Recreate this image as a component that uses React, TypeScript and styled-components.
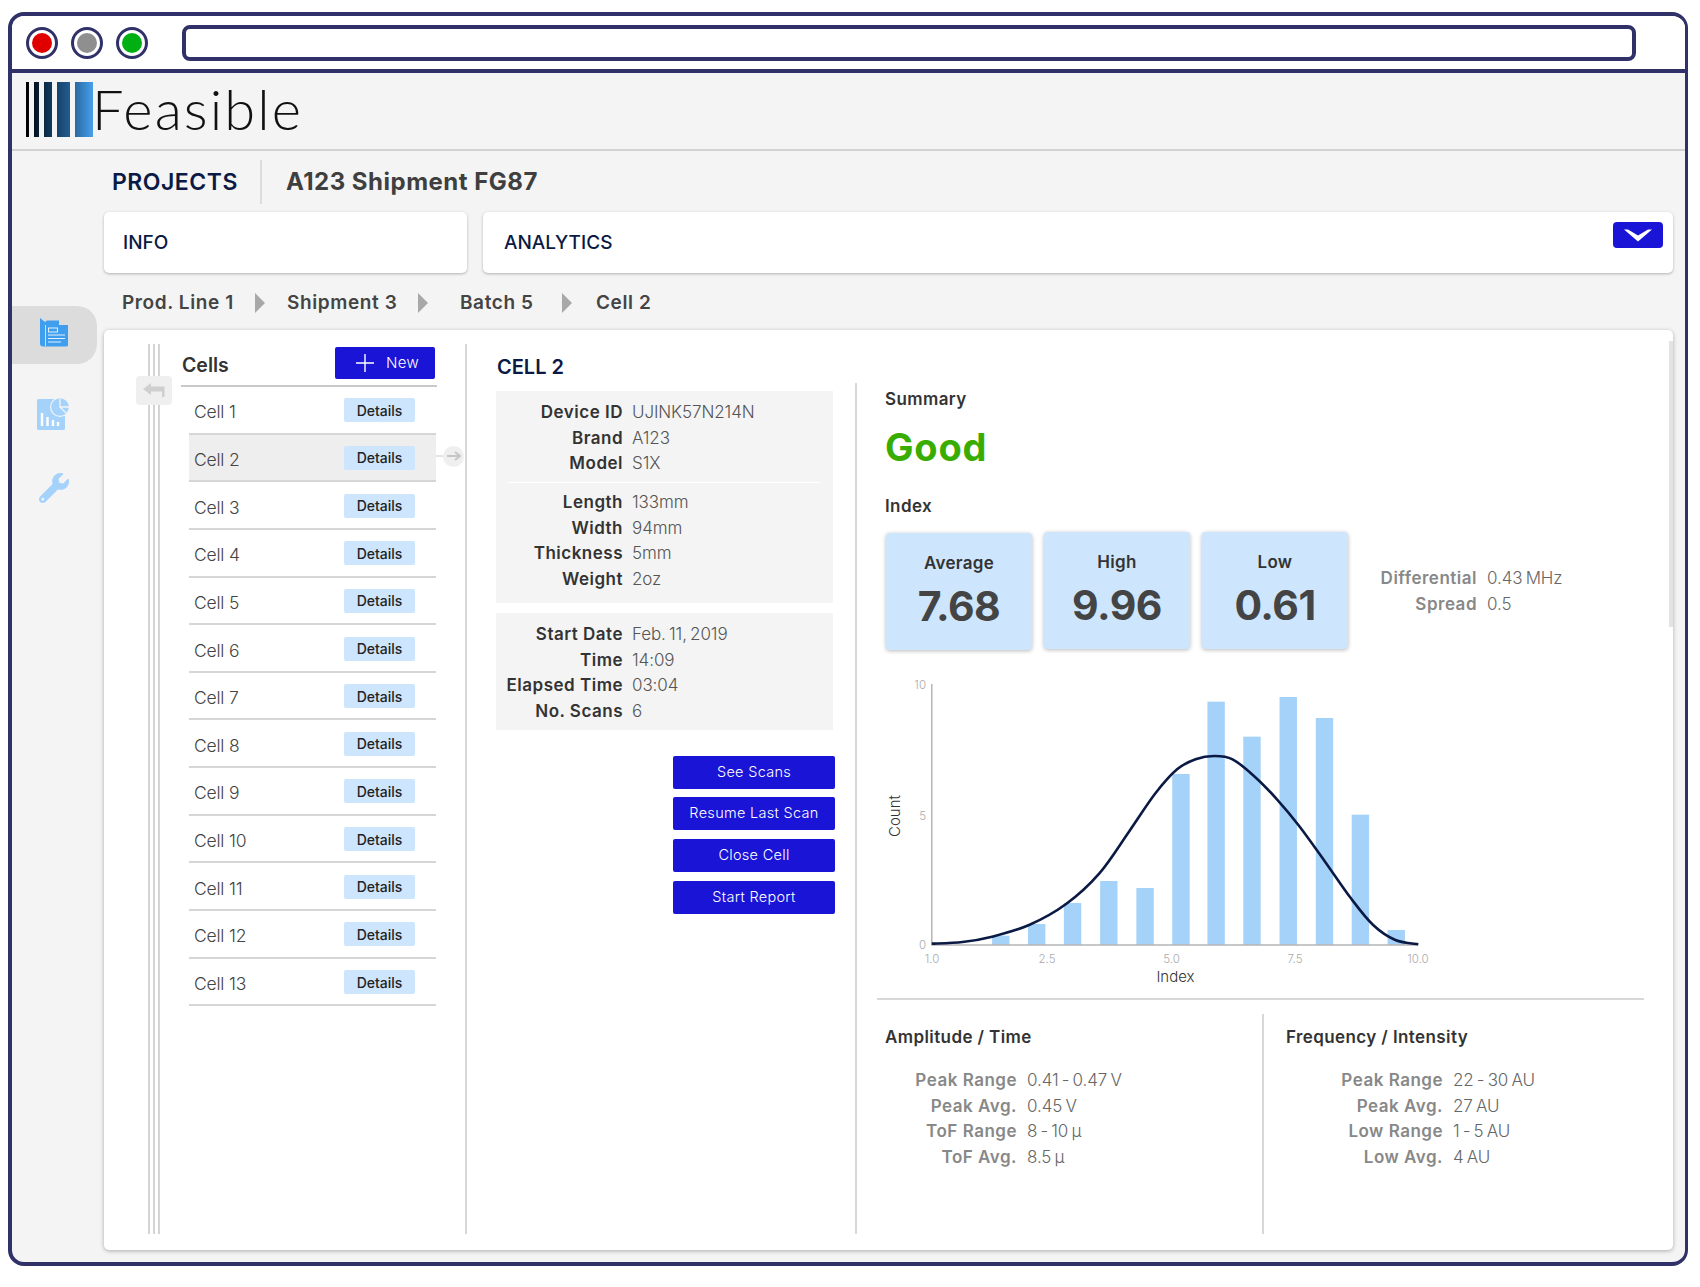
import React from "react";
import styled, { createGlobalStyle } from "styled-components";
import { FaWrench } from "react-icons/fa";

const font = `"Inter", "Open Sans", "Liberation Sans", sans-serif`;
const navy = "#2f3168";
const ink = "#0b1a44";
const blue = "#1a14d6";
const paleBlue = "#cde6fd";

const Global = createGlobalStyle`
  * { box-sizing: border-box; }
  html, body { margin: 0; padding: 0; background: #fff; }
  body { font-family: ${font}; color: #333; }
`;

const Page = styled.div`
  padding: 12px 12px 21px 8px;
  width: 1700px;
  height: 1287px;
`;
const Window = styled.div`
  height: 1254px;
  border: solid ${navy};
  border-width: 4px 3px 4px 4px;
  border-radius: 16px;
  overflow: hidden;
  display: flex;
  flex-direction: column;
  background: #f4f4f4;
`;
const TitleBar = styled.div`
  height: 57px;
  flex: none;
  background: #fff;
  border-bottom: 4px solid ${navy};
  display: flex;
  align-items: center;
  padding: 0 49px 0 14px;
`;
const Lights = styled.div`
  display: flex;
  gap: 13px;
  margin-right: 34px;
`;
const Light = styled.span<{ $c: string }>`
  width: 32px;
  height: 32px;
  border-radius: 50%;
  border: 3.5px solid ${navy};
  padding: 3px;
  background: #fff;
  display: block;
  &::after {
    content: "";
    display: block;
    width: 100%;
    height: 100%;
    border-radius: 50%;
    background: ${(p) => p.$c};
  }
`;
const UrlBar = styled.div`
  flex: 1;
  height: 36px;
  border: 4px solid ${navy};
  border-radius: 8px;
  background: #fff;
`;
const LogoBar = styled.div`
  height: 78px;
  flex: none;
  border-bottom: 2px solid #d2d2d2;
  display: flex;
  align-items: flex-start;
  padding: 9px 0 0 14px;
`;
const LogoMark = styled.svg`
  width: 68px;
  height: 55px;
  flex: none;
  display: block;
`;
const LogoText = styled.div`
  font-family: "Lato", ${font};
  font-weight: 300;
  font-size: 56px;
  line-height: 53px;
  color: #111;
  margin-left: -2px;
  letter-spacing: 2.1px;
`;
const Body = styled.div`
  flex: 1;
  display: flex;
  min-height: 0;
`;
const Nav = styled.nav`
  width: 92px;
  flex: none;
  padding-top: 155px;
  display: flex;
  flex-direction: column;
`;
const NavItem = styled.div<{ $active?: boolean; $h: number; $pt: number }>`
  width: 85px;
  height: ${(p) => p.$h}px;
  display: flex;
  justify-content: center;
  padding: ${(p) => p.$pt}px 2px 0 0;
  border-radius: 0 20px 20px 0;
  background: ${(p) => (p.$active ? "#dcdcdc" : "transparent")};
`;
const Main = styled.div`
  flex: 1;
  min-width: 0;
  padding-right: 12px;
  display: flex;
  flex-direction: column;
`;
const ProjectRow = styled.div`
  height: 61px;
  flex: none;
  display: flex;
  align-items: center;
  padding-left: 8px;
`;
const ProjectsLabel = styled.div`
  font-size: 23px;
  font-weight: 600;
  color: ${ink};
  width: 150px;
  height: 44px;
  line-height: 44px;
  border-right: 2px solid #dcdcdc;
  margin-top: 1px;
  letter-spacing: 0.5px;
`;
const ProjectName = styled.div`
  font-size: 24px;
  font-weight: 700;
  color: #3f3f3f;
  margin-left: 24px;
  letter-spacing: 0.5px;
`;
const Tabs = styled.div`
  height: 61px;
  flex: none;
  display: flex;
  gap: 16px;
`;
const Tab = styled.div<{ $w?: number; $pad: number }>`
  ${(p) => (p.$w ? `width: ${p.$w}px; flex: none;` : "flex: 1;")}
  position: relative;
  background: #fff;
  border-radius: 5px;
  box-shadow: 0 1px 3px rgba(0, 0, 0, 0.28);
  display: flex;
  align-items: center;
  padding-left: ${(p) => p.$pad}px;
  font-size: 19px;
  font-weight: 500;
  color: ${ink};
`;
const Collapse = styled.button`
  position: absolute;
  top: 10px;
  right: 10px;
  width: 50px;
  height: 26px;
  border: 0;
  padding: 0;
  border-radius: 4px;
  background: ${blue};
  display: flex;
  align-items: center;
  justify-content: center;
`;
const Crumbs = styled.div`
  height: 57px;
  flex: none;
  display: flex;
  align-items: center;
  padding: 2px 0 0 18px;
  font-size: 19px;
  font-weight: 600;
  color: #444;
  letter-spacing: 0.6px;
`;
const Crumb = styled.span<{ $w: number }>`
  width: ${(p) => p.$w}px;
  flex: none;
  white-space: nowrap;
`;
const CrumbArrow = styled.span<{ $w: number }>`
  width: ${(p) => p.$w}px;
  flex: none;
  &::before {
    content: "";
    display: block;
    width: 0;
    height: 0;
    border-left: 10px solid #a8a8a8;
    border-top: 10px solid transparent;
    border-bottom: 10px solid transparent;
  }
`;
const Card = styled.div`
  position: relative;
  height: 920px;
  flex: none;
  background: #fff;
  border-radius: 5px;
  box-shadow: 0 1px 4px rgba(0, 0, 0, 0.3);
  display: flex;
  padding: 14px 0 16px 44px;
`;
const ScrollBar = styled.div`
  position: absolute;
  top: 11px;
  right: 0;
  width: 4px;
  height: 286px;
  background: #e3e3e3;
`;
const Rails = styled.div`
  width: 12px;
  flex: none;
  border-left: 2px solid #d4d4d4;
  border-right: 2px solid #d4d4d4;
  background: linear-gradient(#d4d4d4, #d4d4d4) center / 2px 100% no-repeat;
`;
const BackButton = styled.div`
  position: absolute;
  left: 32px;
  top: 46px;
  width: 36px;
  height: 29px;
  border-radius: 4px;
  background: #efefef;
  display: flex;
  align-items: center;
  justify-content: center;
`;
const ListColumn = styled.div`
  width: 307px;
  flex: none;
  border-right: 2px solid #d8d8d8;
  padding: 0 28px 0 21px;
`;
const ListHeader = styled.div`
  height: 43px;
  border-bottom: 2px solid #c9c9c9;
  display: flex;
  align-items: center;
  justify-content: space-between;
  padding: 0 2px 4px 1px;
`;
const ListTitle = styled.div`
  font-size: 19.5px;
  font-weight: 600;
  color: #333;
  padding-top: 4px;
`;
const NewButton = styled.button`
  width: 100px;
  height: 32px;
  border: 0;
  border-radius: 2px;
  background: ${blue};
  color: #fff;
  font: 300 15px ${font};
  display: flex;
  align-items: center;
  gap: 12px;
  padding: 0 0 0 21px;
  letter-spacing: 0.3px;
`;
const Row = styled.div<{ $selected?: boolean }>`
  position: relative;
  height: 47.65px;
  margin-left: 8px;
  margin-right: 1px;
  display: flex;
  align-items: center;
  justify-content: space-between;
  padding: 4px 21px 0 5px;
  font-size: 17.5px;
  font-weight: 300;
  letter-spacing: -0.2px;
  color: #444;
  border-bottom: 2px solid #d6d6d6;
  background: ${(p) => (p.$selected ? "#eeeeee" : "transparent")};
`;
const DetailsButton = styled.button`
  width: 71px;
  height: 24px;
  border: 0;
  border-radius: 2px;
  background: ${paleBlue};
  color: #222;
  font: 500 14px ${font};
  padding: 0;
  margin-top: -3px;
`;
const Connector = styled.div`
  position: absolute;
  top: 11px;
  right: -28px;
  width: 21px;
  height: 21px;
  border-radius: 50%;
  background: #efefef;
  display: flex;
  align-items: center;
  justify-content: center;
  &::before {
    content: "";
    position: absolute;
    left: -7px;
    top: 9.5px;
    width: 7px;
    height: 2px;
    background: #e4e4e4;
  }
`;
const DetailColumn = styled.div`
  width: 388px;
  flex: none;
  padding-left: 29px;
`;
const DetailTitle = styled.div`
  height: 47px;
  line-height: 47px;
  font-size: 20px;
  font-weight: 600;
  color: ${ink};
  padding-left: 1px;
`;
const Panel = styled.div<{ $pb: number; $mt?: number }>`
  width: 337px;
  background: #f4f4f4;
  padding: 9px 0 ${(p) => p.$pb}px;
  margin-top: ${(p) => p.$mt ?? 0}px;
`;
const PanelRule = styled.div`
  height: 1px;
  background: #fff;
  margin: 5px 12px 7px;
`;
const DataRow = styled.div<{ $label: number; $gap: number; $muted?: boolean }>`
  display: grid;
  grid-template-columns: ${(p) => p.$label}px 1fr;
  column-gap: ${(p) => p.$gap}px;
  height: 25.7px;
  line-height: 25.7px;
  font-size: 17px;
  white-space: nowrap;
  color: ${(p) => (p.$muted ? "#666" : "#555")};
  letter-spacing: -0.1px;
  b {
    font-weight: 600;
    text-align: right;
    color: ${(p) => (p.$muted ? "#888" : "#333")};
    letter-spacing: 0.5px;
  }
  span {
    font-weight: 300;
    word-spacing: -1.5px;
  }
`;
const Actions = styled.div`
  display: flex;
  flex-direction: column;
  gap: 8.9px;
  align-items: flex-end;
  margin-top: 26px;
  width: 339px;
`;
const ActionButton = styled.button`
  width: 162px;
  height: 33px;
  border: 0;
  border-radius: 2px;
  background: ${blue};
  color: #fff;
  font: 300 14.5px ${font};
  letter-spacing: 0.3px;
  padding: 0 0 2px;
`;
const Results = styled.div`
  flex: 1;
  min-width: 0;
  margin-top: 39px;
  border-left: 2px solid #d8d8d8;
  display: flex;
  flex-direction: column;
`;
const Heading = styled.div`
  height: 24px;
  line-height: 24px;
  font-size: 17px;
  font-weight: 600;
  color: #333;
  letter-spacing: 0.4px;
`;
const SummaryBlock = styled.div`
  padding: 4px 0 0 28px;
`;
const Verdict = styled.div`
  height: 48px;
  line-height: 48px;
  margin: 12px 0 23px;
  font-size: 38px;
  font-weight: 700;
  color: #38ad00;
  letter-spacing: 0.8px;
`;
const StatRow = styled.div`
  display: flex;
  align-items: center;
  margin: 14px 0 0 1px;
`;
const StatCards = styled.div`
  display: flex;
  gap: 12px;
`;
const StatCard = styled.div<{ $nudge?: boolean }>`
  width: 146px;
  height: 117px;
  margin-top: ${(p) => (p.$nudge ? 1 : 0)}px;
  border-radius: 4px;
  background: ${paleBlue};
  box-shadow: 0 1px 4px rgba(0, 0, 0, 0.28);
  text-align: center;
  padding-top: 18px;
`;
const StatLabel = styled.div`
  height: 24px;
  line-height: 24px;
  font-size: 17px;
  font-weight: 600;
  color: #333;
  letter-spacing: 0.3px;
`;
const StatValue = styled.div`
  height: 50px;
  line-height: 50px;
  margin-top: 6px;
  font-size: 41px;
  font-weight: 700;
  color: #444;
  letter-spacing: -0.5px;
`;
const SpreadBlock = styled.div`
  padding-top: 2px;
`;
const Chart = styled.svg`
  display: block;
  width: 580px;
  height: 325px;
  margin: 20px 0 0 13px;
  flex: none;
`;
const ChartRule = styled.div`
  height: 2px;
  width: 767px;
  background: #d8d8d8;
  margin: 3px 0 0 20px;
  flex: none;
`;
const Lower = styled.div`
  flex: 1;
  display: flex;
  min-height: 0;
  padding-top: 14px;
`;
const LowerCol = styled.div<{ $w?: number; $pad: number; $rule?: boolean }>`
  ${(p) => (p.$w ? `width: ${p.$w}px; flex: none;` : "flex: 1;")}
  padding: 11px 0 0 ${(p) => p.$pad}px;
  ${(p) => (p.$rule ? "border-left: 2px solid #d8d8d8;" : "")}
`;
const LowerRows = styled.div`
  margin-top: 19px;
`;

const cells = Array.from({ length: 13 }, (_, i) => `Cell ${i + 1}`);

const bars: [number, number][] = [
  [330, 797], [427, 762], [524, 699], [622, 633], [720, 654], [817, 312],
  [912, 95], [1009, 200], [1107, 81], [1205, 144], [1302, 434], [1399, 780],
];
const sx = (v: number) => v / 2.703;
const sy = (v: number) => v / 3;
const curve: [number, number][] = [
  [167, 821], [250, 816], [330, 800], [430, 765], [530, 702], [620, 610], [700, 485], [770, 372],
  [830, 298], [880, 268], [930, 258], [980, 268], [1040, 320], [1100, 388], [1160, 468],
  [1230, 575], [1300, 685], [1360, 765], [1420, 810], [1482, 823],
];
function smooth(pts: [number, number][]) {
  const p = pts.map(([x, y]) => [sx(x), sy(y)]);
  let d = `M${p[0][0]} ${p[0][1]}`;
  for (let i = 0; i < p.length - 1; i++) {
    const a = p[Math.max(0, i - 1)], b = p[i], c = p[i + 1], e = p[Math.min(p.length - 1, i + 2)];
    d += ` C${b[0] + (c[0] - a[0]) / 6} ${b[1] + (c[1] - a[1]) / 6} ${c[0] - (e[0] - b[0]) / 6} ${c[1] - (e[1] - b[1]) / 6} ${c[0]} ${c[1]}`;
  }
  return d;
}

const Histogram = () => (
  <Chart viewBox="0 0 580 325" fontFamily={font}>
    {bars.map(([x, top]) => (
      <rect key={x} x={sx(x)} y={sy(top)} width={17.4} height={sy(825 - top)} fill="#a5d2f8" />
    ))}
    <path d={`M${sx(167)} ${sy(42)} V${sy(825)} H${sx(1482)}`} fill="none" stroke="#b5b5b5" strokeWidth="1.5" />
    <path d={smooth(curve)} fill="none" stroke="#0b1a44" strokeWidth="2.6" />
    <g fontSize="11.5" fill="#aaa" fontWeight="300">
      <text x="56" y="19" textAnchor="end">10</text>
      <text x="56" y="150" textAnchor="end">5</text>
      <text x="56" y="279" textAnchor="end">0</text>
      <text x="62" y="293" textAnchor="middle">1.0</text>
      <text x="177" y="293" textAnchor="middle">2.5</text>
      <text x="301.5" y="293" textAnchor="middle">5.0</text>
      <text x="425" y="293" textAnchor="middle">7.5</text>
      <text x="548" y="293" textAnchor="middle">10.0</text>
    </g>
    <text x="305.5" y="311.5" textAnchor="middle" fontSize="15" fontWeight="300" fill="#333">Index</text>
    <text transform="translate(30 146) rotate(-90)" textAnchor="middle" fontSize="15" fontWeight="300" fill="#333">Count</text>
  </Chart>
);

const Folder = () => (
  <svg width="30" height="29" viewBox="0 0 30 29">
    <path d="M1 0 L6 4 V7 H29 V27 a1.5 1.5 0 0 1-1.5 1.5 H4 a3 3 0 0 1-3-3 Z" fill="#3f9eee" />
    <path d="M6 4 L8 2.5 H20 V7 H6Z" fill="#3f9eee" />
    <path d="M6.5 7 V28" stroke="#dcdcdc" strokeWidth="1" />
    <rect x="9.5" y="10" width="9" height="4" fill="none" stroke="#dff0ff" strokeWidth="1" />
    <path d="M9 17 H26 M9 20.5 H26 M9 24 H22" stroke="#dff0ff" strokeWidth="1.1" />
  </svg>
);
const ChartIcon = () => (
  <svg width="33" height="33" viewBox="0 0 33 33">
    <rect x="0" y="2" width="28" height="31" rx="1.5" fill="#a5d2fb" />
    <circle cx="23" cy="10" r="10" fill="#f4f4f4" />
    <circle cx="23" cy="10" r="8.8" fill="#a5d2fb" />
    <path d="M23 1.5 V10 H32 M23 10 L29 16" stroke="#f4f4f4" strokeWidth="1.3" fill="none" />
    <path d="M5 29 V16 M10.5 29 V20 M16 29 V23 M21 29 V25" stroke="#fff" strokeWidth="2.4" />
  </svg>
);
const Chevron = () => (
  <svg width="28" height="13" viewBox="0 0 28 13">
    <path d="M0 0.5 H4 L14 6.5 L24 0.5 H28 L14 12.5 Z" fill="#fff" />
  </svg>
);
const Plus = () => (
  <svg width="18" height="18" viewBox="0 0 18 18">
    <path d="M9 0 V18 M0 9 H18" stroke="#fff" strokeWidth="1.4" />
  </svg>
);
const BackArrow = () => (
  <svg width="22" height="15" viewBox="0 0 22 15">
    <path d="M0 6 L8 0 V3.5 H21.5 V14 H19 V8.5 H8 V12 Z" fill="#cfcfcf" />
  </svg>
);
const ForwardArrow = () => (
  <svg width="14" height="10" viewBox="0 0 14 10">
    <path d="M0 5 H12 M8 1 L13 5 L8 9" stroke="#c6c6c6" strokeWidth="2" fill="none" />
  </svg>
);

const Data = ({ rows, label, gap, muted }: { rows: [string, string][]; label: number; gap: number; muted?: boolean }) => (
  <>
    {rows.map(([k, v]) => (
      <DataRow key={k} $label={label} $gap={gap} $muted={muted}>
        <b>{k}</b>
        <span>{v}</span>
      </DataRow>
    ))}
  </>
);

export default function App() {
  return (
    <Page>
      <Global />
      <Window>
        <TitleBar>
          <Lights>
            <Light $c="#e00000" />
            <Light $c="#8f8f8f" />
            <Light $c="#00b012" />
          </Lights>
          <UrlBar />
        </TitleBar>
        <LogoBar>
          <LogoMark viewBox="0 0 68 55">
            <defs>
              <linearGradient id="lg" x1="0" x2="1" y1="0" y2="0">
                <stop offset="0" stopColor="#000" />
                <stop offset="0.35" stopColor="#0f3557" />
                <stop offset="0.68" stopColor="#245f93" />
                <stop offset="1" stopColor="#479fec" />
              </linearGradient>
            </defs>
            <path d="M0 0h3v55h-3z M8 0h5v55h-5z M18 0h8v55h-8z M31 0h13v55h-13z M49 0h18v55h-18z" fill="url(#lg)" />
          </LogoMark>
          <LogoText>Feasible</LogoText>
        </LogoBar>
        <Body>
          <Nav>
            <NavItem $active $h={58} $pt={12}><Folder /></NavItem>
            <NavItem $h={76} $pt={33}><ChartIcon /></NavItem>
            <NavItem $h={60} $pt={33}><FaWrench size={30} color="#a5d2fb" /></NavItem>
          </Nav>
          <Main>
            <ProjectRow>
              <ProjectsLabel>PROJECTS</ProjectsLabel>
              <ProjectName>A123 Shipment FG87</ProjectName>
            </ProjectRow>
            <Tabs>
              <Tab $w={363} $pad={19}>INFO</Tab>
              <Tab $pad={21}>
                ANALYTICS
                <Collapse aria-label="Collapse"><Chevron /></Collapse>
              </Tab>
            </Tabs>
            <Crumbs>
              <Crumb $w={133}>Prod. Line 1</Crumb>
              <CrumbArrow $w={32} />
              <Crumb $w={131}>Shipment 3</Crumb>
              <CrumbArrow $w={42} />
              <Crumb $w={102}>Batch 5</Crumb>
              <CrumbArrow $w={34} />
              <Crumb $w={60}>Cell 2</Crumb>
            </Crumbs>
            <Card>
              <ScrollBar />
              <Rails />
              <BackButton><BackArrow /></BackButton>
              <ListColumn>
                <ListHeader>
                  <ListTitle>Cells</ListTitle>
                  <NewButton><Plus />New</NewButton>
                </ListHeader>
                {cells.map((c, i) => (
                  <Row key={c} $selected={i === 1}>
                    {c}
                    <DetailsButton>Details</DetailsButton>
                    {i === 1 && <Connector><ForwardArrow /></Connector>}
                  </Row>
                ))}
              </ListColumn>
              <DetailColumn>
                <DetailTitle>CELL 2</DetailTitle>
                <Panel $pb={10}>
                  <Data label={127} gap={9} rows={[["Device ID", "UJINK57N214N"], ["Brand", "A123"], ["Model", "S1X"]]} />
                  <PanelRule />
                  <Data label={127} gap={9} rows={[["Length", "133mm"], ["Width", "94mm"], ["Thickness", "5mm"], ["Weight", "2oz"]]} />
                </Panel>
                <Panel $pb={5} $mt={10}>
                  <Data label={127} gap={9} rows={[["Start Date", "Feb. 11, 2019"], ["Time", "14:09"], ["Elapsed Time", "03:04"], ["No. Scans", "6"]]} />
                </Panel>
                <Actions>
                  <ActionButton>See Scans</ActionButton>
                  <ActionButton>Resume Last Scan</ActionButton>
                  <ActionButton>Close Cell</ActionButton>
                  <ActionButton>Start Report</ActionButton>
                </Actions>
              </DetailColumn>
              <Results>
                <SummaryBlock>
                  <Heading>Summary</Heading>
                  <Verdict>Good</Verdict>
                  <Heading>Index</Heading>
                  <StatRow>
                    <StatCards>
                      <StatCard $nudge><StatLabel>Average</StatLabel><StatValue>7.68</StatValue></StatCard>
                      <StatCard><StatLabel>High</StatLabel><StatValue>9.96</StatValue></StatCard>
                      <StatCard><StatLabel>Low</StatLabel><StatValue>0.61</StatValue></StatCard>
                    </StatCards>
                    <SpreadBlock>
                      <Data muted label={129} gap={10} rows={[["Differential", "0.43 MHz"], ["Spread", "0.5"]]} />
                    </SpreadBlock>
                  </StatRow>
                </SummaryBlock>
                <Histogram />
                <ChartRule />
                <Lower>
                  <LowerCol $w={405} $pad={28}>
                    <Heading>Amplitude / Time</Heading>
                    <LowerRows>
                      <Data muted label={132} gap={10} rows={[["Peak Range", "0.41 - 0.47 V"], ["Peak Avg.", "0.45 V"], ["ToF Range", "8 - 10 µ"], ["ToF Avg.", "8.5 µ"]]} />
                    </LowerRows>
                  </LowerCol>
                  <LowerCol $pad={22} $rule>
                    <Heading>Frequency / Intensity</Heading>
                    <LowerRows>
                      <Data muted label={157} gap={10} rows={[["Peak Range", "22 - 30 AU"], ["Peak Avg.", "27 AU"], ["Low Range", "1 - 5 AU"], ["Low Avg.", "4 AU"]]} />
                    </LowerRows>
                  </LowerCol>
                </Lower>
              </Results>
            </Card>
          </Main>
        </Body>
      </Window>
    </Page>
  );
}
